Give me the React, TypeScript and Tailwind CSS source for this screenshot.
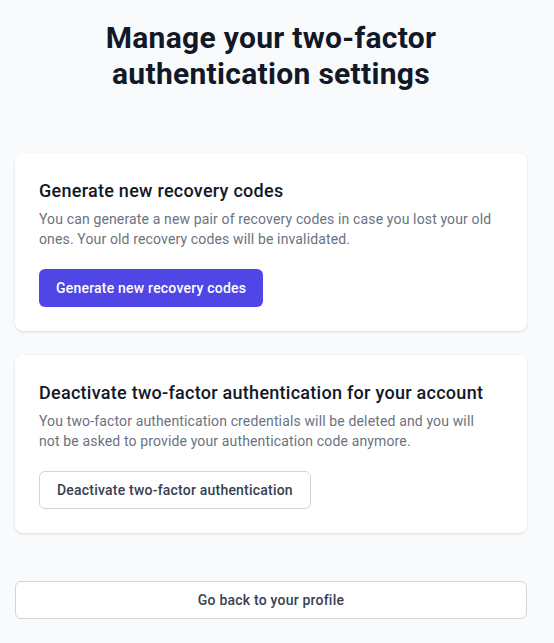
export default function App() {
  return (
    <div className="min-h-[643px] bg-[#f9fafb]" style={{ fontFamily: "Roboto, 'Liberation Sans', sans-serif" }}>
      <div className="w-[512px] ml-[15px] pt-5 pb-6">
        <h1 className="text-center text-[30px] leading-9 font-bold text-[#111827] tracking-[0.01em]">
          Manage your two-factor
          <br />
          authentication settings
        </h1>

        <div className="mt-[61px] flex flex-col gap-6">
          <div className="bg-white rounded-lg shadow px-6 py-6">
            <h2 className="text-[18px] leading-7 font-medium text-[#111827] tracking-[0.015em]">Generate new recovery codes</h2>
            <p className="mt-1 max-w-[456px] text-sm leading-5 text-[#6b7280] tracking-[0.01em]">
              You can generate a new pair of recovery codes in case you lost your old ones. Your old recovery codes will be invalidated.
            </p>
            <button className="mt-5 h-[38px] px-[17px] rounded-md bg-[#4f46e5] text-white text-sm font-medium tracking-[0.015em]">
              Generate new recovery codes
            </button>
          </div>

          <div className="bg-white rounded-lg shadow px-6 py-6">
            <h2 className="text-[18px] leading-7 font-medium text-[#111827] tracking-[0.015em]">Deactivate two-factor authentication for your account</h2>
            <p className="mt-1 max-w-[456px] text-sm leading-5 text-[#6b7280] tracking-[0.01em]">
              You two-factor authentication credentials will be deleted and you will not be asked to provide your authentication code anymore.
            </p>
            <button className="mt-5 h-[38px] px-[17px] rounded-md bg-white border border-[#d1d5db] text-[#374151] text-sm font-medium tracking-[0.015em]">
              Deactivate two-factor authentication
            </button>
          </div>
        </div>

        <button className="mt-12 w-full h-[38px] rounded-md bg-white border border-[#d1d5db] text-[#374151] text-sm font-medium tracking-[0.015em]">
          Go back to your profile
        </button>
      </div>
    </div>
  );
}
